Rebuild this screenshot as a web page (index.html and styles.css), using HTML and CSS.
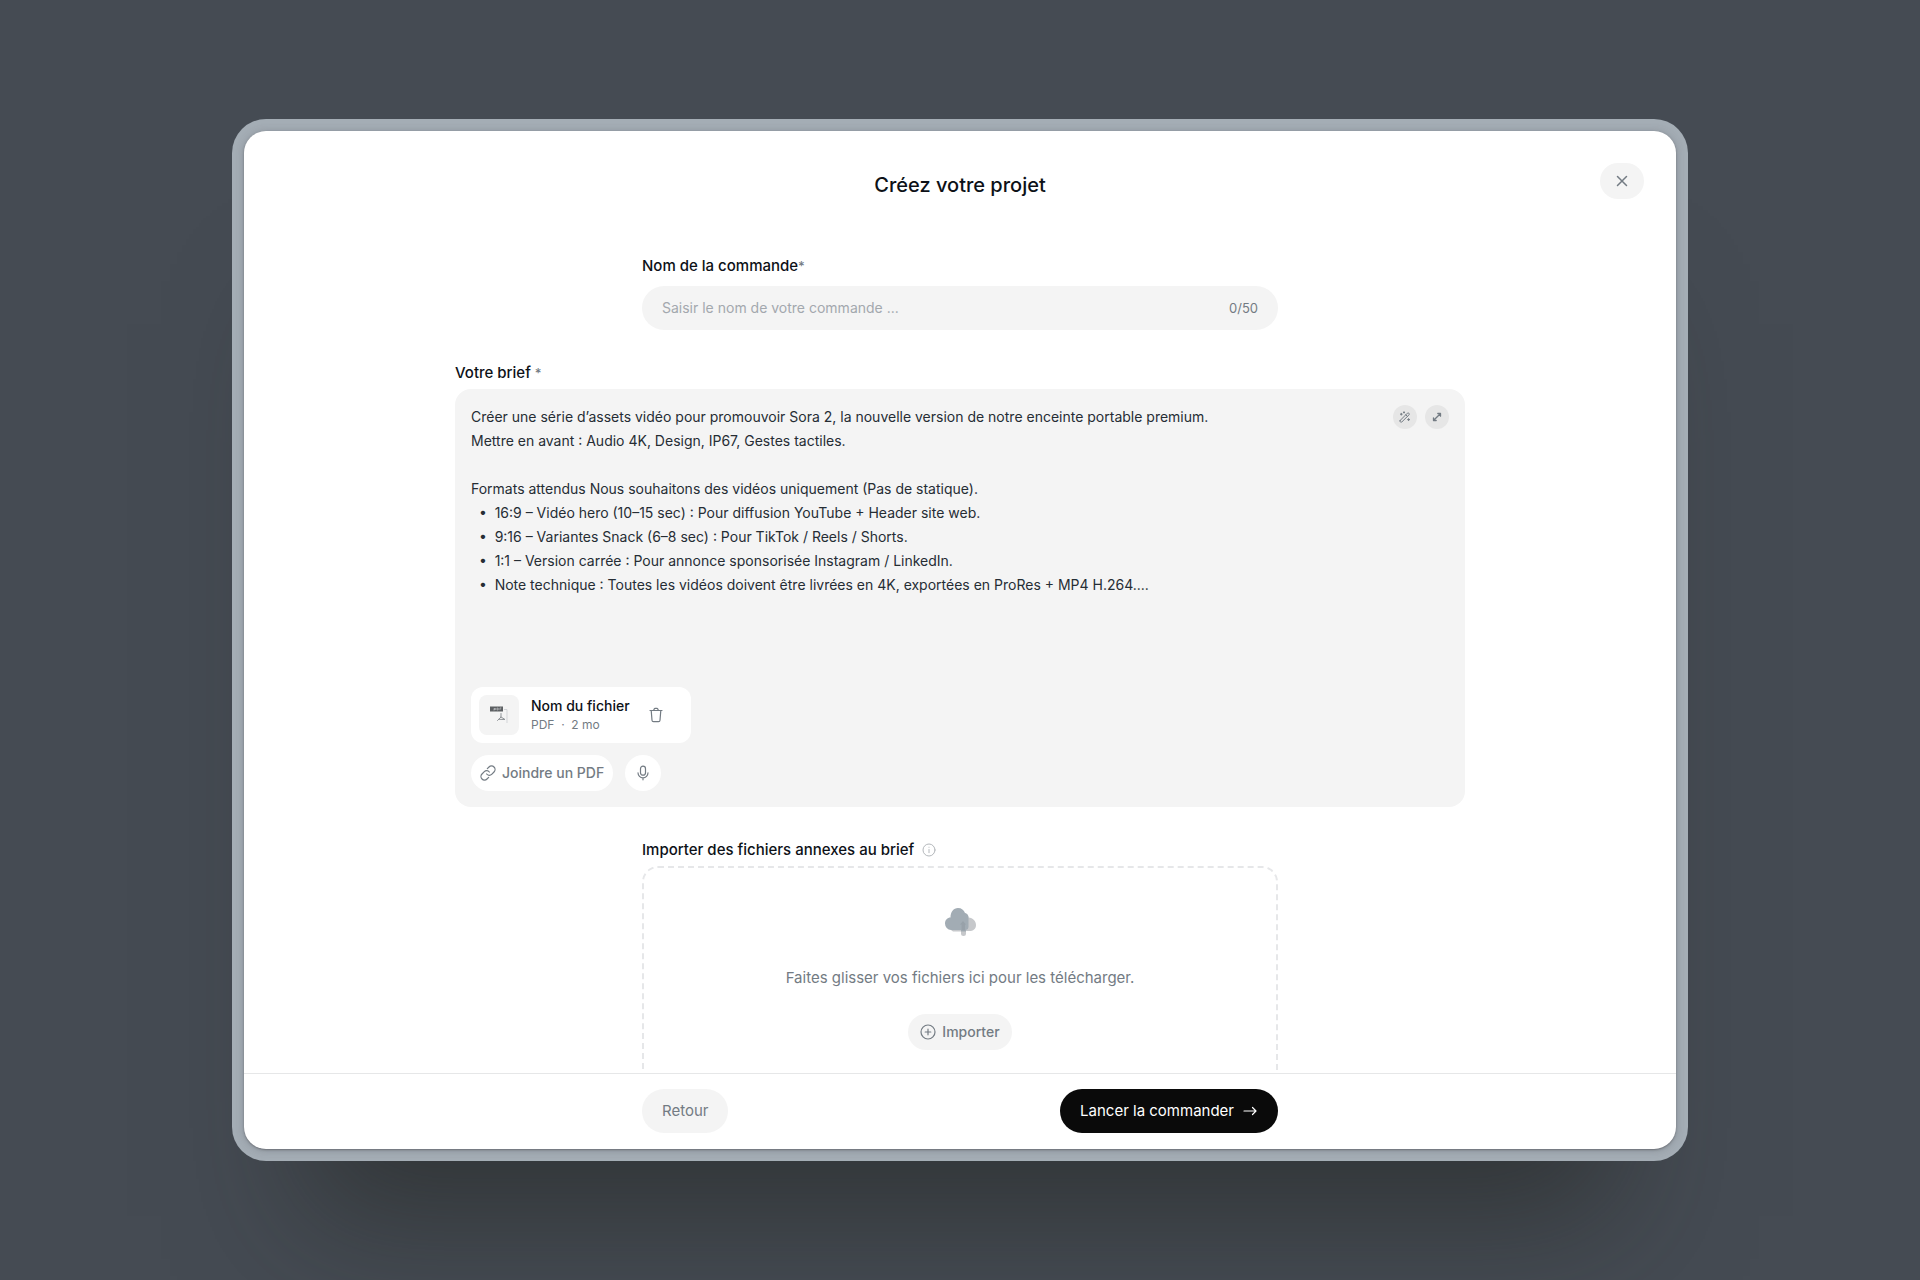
FILE: index.html
```html
<!DOCTYPE html>
<html lang="fr">
<head>
<meta charset="utf-8">
<meta name="viewport" content="width=device-width, initial-scale=1">
<title>Créez votre projet</title>
<link rel="stylesheet" href="styles.css">
</head>
<body>
<main class="modal">
  <form class="dialog">
    <header class="dialog-header">
      <h1 class="title">Créez votre projet</h1>
      <button class="close" type="button" aria-label="Fermer">
        <svg width="16" height="16" viewBox="0 0 16 16" fill="none" stroke="currentColor" stroke-width="1.5" stroke-linecap="round"><path d="M3.5 3.5l9 9M12.5 3.5l-9 9"/></svg>
      </button>
    </header>

    <div class="dialog-body">
      <section class="field narrow">
        <label class="label" for="order-name">Nom de la commande<span class="required">*</span></label>
        <div class="input-wrap">
          <input class="input" id="order-name" type="text" maxlength="50" placeholder="Saisir le nom de votre commande ...">
          <span class="counter">0/50</span>
        </div>
      </section>

      <section class="field wide">
        <label class="label" for="brief">Votre brief <span class="required">*</span></label>
        <div class="brief">
          <div class="brief-top">
            <textarea class="brief-text" id="brief" rows="11" spellcheck="false">Créer une série d’assets vidéo pour promouvoir Sora 2, la nouvelle version de notre enceinte portable premium.
Mettre en avant : Audio 4K, Design, IP67, Gestes tactiles.

Formats attendus Nous souhaitons des vidéos uniquement (Pas de statique).
  •  16:9 – Vidéo hero (10–15 sec) : Pour diffusion YouTube + Header site web.
  •  9:16 – Variantes Snack (6–8 sec) : Pour TikTok / Reels / Shorts.
  •  1:1 – Version carrée : Pour annonce sponsorisée Instagram / LinkedIn.
  •  Note technique : Toutes les vidéos doivent être livrées en 4K, exportées en ProRes + MP4 H.264....</textarea>
            <div class="brief-tools">
              <button class="tool" type="button" aria-label="Améliorer le brief">
                <svg width="12" height="12" viewBox="0 0 12 12" fill="none" stroke="currentColor" stroke-width="1" stroke-linecap="round" stroke-linejoin="round"><path d="M1.2 9.4L8.4 2.2a1 1 0 0 1 1.4 0l.2.2a1 1 0 0 1 0 1.4L2.8 11a1 1 0 0 1-1.4 0l-.2-.2a1 1 0 0 1 0-1.4zM6.8 3.8l1.6 1.6M2.3 2.3v1.8M1.4 3.2h1.8M5 .8v1.2M4.4 1.4h1.2M9.6 7.6v2M8.6 8.6h2"/></svg>
              </button>
              <button class="tool" type="button" aria-label="Agrandir">
                <svg width="12" height="12" viewBox="0 0 12 12" fill="none" stroke="currentColor" stroke-width="1.3" stroke-linecap="round" stroke-linejoin="round"><path d="M6.8 2.5h2.7v2.7M5.2 9.5H2.5V6.8M9.3 2.7L2.7 9.3"/></svg>
              </button>
            </div>
          </div>
          <div class="file">
            <span class="thumb">
              <svg width="20" height="20" viewBox="0 0 20 20" fill="none"><path d="M15 4.500h3V18" stroke="#d3d5d8"/><rect x="1" y="1.500" width="13" height="5" fill="#5d6063"/><path d="M5 5.500v-2h1.500v1H5M8 3v2h.800l.700-1-.700-1zM11 5v-2h1.300" stroke="#c4c6c8" stroke-width=".7"/><path d="M12 8.500v3.500l-3.500 3.500M12 12l4 2.500-6-.200" stroke="#909498" stroke-linecap="round" stroke-linejoin="round"/></svg>
            </span>
            <span class="file-info">
              <span class="file-name">Nom du fichier</span>
              <span class="file-meta">PDF &nbsp;·&nbsp; 2 mo</span>
            </span>
            <button class="trash" type="button" aria-label="Supprimer le fichier">
              <svg width="16" height="16" viewBox="0 0 16 16" fill="none" stroke="currentColor" stroke-width="1.200" stroke-linecap="round" stroke-linejoin="round"><path d="M2 3.500h12M3.200 3.500l.8 9.800a1.500 1.500 0 0 0 1.500 1.400h5a1.500 1.500 0 0 0 1.500-1.400l.8-9.800M5.700 3.300l.5-1.300a1 1 0 0 1 .9-.6h1.800a1 1 0 0 1 .9.600l.5 1.300"/></svg>
            </button>
          </div>
          <div class="brief-actions">
            <button class="pill attach" type="button">
              <svg width="16" height="16" viewBox="0 0 24 24" fill="none" stroke="currentColor" stroke-width="1.800" stroke-linecap="round" stroke-linejoin="round"><path d="M10 13.500a5 5 0 0 0 7.500.5l3.500-3.500a5 5 0 0 0-7.500-7.500L11 5.500"/><path d="M14 10.500a5 5 0 0 0-7.500-.5L3 13.500a5 5 0 0 0 7.500 7.500l2.500-2.500"/></svg>
              Joindre un PDF
            </button>
            <button class="pill mic" type="button" aria-label="Dicter le brief">
              <svg width="16" height="16" viewBox="0 0 16 16" fill="none" stroke="currentColor" stroke-width="1.200" stroke-linecap="round"><rect x="5.500" y="1.200" width="5" height="9" rx="2.500"/><path d="M3 7.800a5 5 0 0 0 10 0M8 12.800v2"/></svg>
            </button>
          </div>
        </div>
      </section>

      <section class="field narrow">
        <div class="label-row">
          <label class="label" for="annexes">Importer des fichiers annexes au brief</label>
          <svg class="info" width="14" height="14" viewBox="0 0 14 14" fill="none" stroke="currentColor" stroke-linecap="round"><circle cx="7" cy="7" r="6"/><path d="M7 6.500v3.200M7 4.200v.1"/></svg>
        </div>
        <div class="dropzone">
          <input id="annexes" type="file" multiple hidden>
          <svg class="cloud" width="32" height="32" viewBox="0 0 32 32"><path d="M9 25.500a5 5 0 0 1-3-4L19 7c3-.5 5.500 1.500 5.500 4.500 4.500.5 7.500 3.500 7.500 7.500s-3 6-6.500 6H22v2.500a2.500 2.500 0 0 1-5 0v-2z" fill="#c6c8cb"/><path d="M7 24a6.500 6.500 0 0 1-6-6.500c0-3.500 2.500-6 5.500-6C6.500 6 9.500 2 14 2c3.500 0 6 2 7 5 2.500.5 3.500 2.500 3.500 4.500V21a3 3 0 0 1-2.500 3v1.500h-5V24z" fill="#a2acb4"/><path d="M19 15l3 3.500h-1v6h-3.500v-6H16z" fill="#98a1a9"/></svg>
          <p class="drop-text">Faites glisser vos fichiers ici pour les télécharger.</p>
          <button class="pill import" type="button">
            <svg width="16" height="16" viewBox="0 0 16 16" fill="none" stroke="currentColor" stroke-width="1.200" stroke-linecap="round"><circle cx="8" cy="8" r="7"/><path d="M8 5.200v5.600M5.200 8h5.600"/></svg>
            Importer
          </button>
        </div>
      </section>
    </div>

    <footer class="dialog-footer">
      <div class="footer-actions">
        <button class="button secondary" type="button">Retour</button>
        <button class="button primary" type="submit">Lancer la commander
          <svg width="16" height="16" viewBox="0 0 16 16" fill="none" stroke="currentColor" stroke-width="1.200" stroke-linecap="round" stroke-linejoin="round"><path d="M2 8h12M10.500 4.500L14 8l-3.500 3.500"/></svg>
        </button>
      </div>
    </footer>
  </form>
</main>
</body>
</html>
```
FILE: styles.css
```css
:root {
  --ink: #0d1117;
  --text: #262d34;
  --muted: #737b83;
  --faint: #a3a8ae;
  --surface: #f4f4f4;
  --line: #e6e7e8;
}

* { box-sizing: border-box; }

body {
  margin: 0;
  min-height: 100vh;
  display: flex;
  justify-content: center;
  align-items: center;
  padding: 32px;
  background: #454b53;
  color: var(--ink);
  font: 15px/24px Inter, "Liberation Sans", sans-serif;
}

button, input, textarea { font: inherit; }

button {
  border: 0;
  padding: 0;
  cursor: pointer;
  display: flex;
  align-items: center;
  justify-content: center;
}

svg { display: block; flex: none; }

.modal {
  width: 100%;
  max-width: 1456px;
  height: calc(100vh - 238px);
  min-height: 480px;
  padding: 12px;
  display: flex;
  border-radius: 34px;
  background: #a4adb5;
  box-shadow: 0 130px 120px -75px rgba(30, 32, 28, 0.5);
}

.dialog {
  flex: 1;
  min-width: 0;
  display: flex;
  flex-direction: column;
  overflow: hidden;
  border-radius: 22px;
  background: #fff;
  box-shadow: 0 1px 2px rgba(70, 70, 75, 0.5), 0 1px 8px rgba(70, 70, 75, 0.3);
}

.dialog-header {
  display: grid;
  grid-template-columns: 1fr auto 1fr;
  align-items: start;
  padding: 32px 32px 0;
}

.title {
  grid-column: 2;
  margin: 8px 0 0;
  font-size: 20px;
  line-height: 28px;
  font-weight: 500;
}

.close {
  grid-column: 3;
  justify-self: end;
  width: 44px;
  height: 36px;
  border-radius: 18px;
  background: var(--surface);
  color: var(--muted);
}

.dialog-body {
  flex: 1;
  min-height: 0;
  overflow-y: auto;
  scrollbar-width: none;
  padding: 55px 32px 32px;
  display: flex;
  flex-direction: column;
  align-items: center;
  gap: 31px;
}

.field {
  width: 100%;
  display: flex;
  flex-direction: column;
  gap: 4px;
  flex: none;
}

.narrow { max-width: 636px; }
.wide { max-width: 1010px; }

.label { font-weight: 500; }

.required { color: var(--muted); font-size: 13px; }

.label-row {
  display: flex;
  align-items: center;
  gap: 8px;
}

.info { color: #b4b8bc; }

.input-wrap {
  display: flex;
  align-items: center;
  gap: 16px;
  height: 44px;
  margin-top: 4px;
  padding: 0 20px;
  border-radius: 22px;
  background: var(--surface);
}

.input {
  flex: 1;
  min-width: 0;
  border: 0;
  padding: 0;
  outline: 0;
  background: none;
  color: var(--ink);
  font-size: 14px;
}

.input::placeholder { color: var(--faint); opacity: 1; }

.counter { color: var(--muted); font-size: 13px; }

.brief {
  display: flex;
  flex-direction: column;
  align-items: flex-start;
  padding: 16px;
  border-radius: 16px;
  background: var(--surface);
}

.brief-top {
  width: 100%;
  display: flex;
  gap: 16px;
}

.brief-text {
  flex: 1;
  min-width: 0;
  display: block;
  border: 0;
  padding: 0;
  outline: 0;
  resize: none;
  background: none;
  color: var(--text);
  font-size: 14px;
  overflow: hidden;
}

.brief-tools {
  display: flex;
  gap: 8px;
}

.tool {
  width: 24px;
  height: 24px;
  border-radius: 12px;
  background: #e6e6e6;
  color: var(--muted);
}

.file {
  width: 220px;
  height: 56px;
  margin-top: 18px;
  padding: 8px;
  display: flex;
  align-items: center;
  border-radius: 12px;
  background: #fff;
}

.thumb {
  width: 40px;
  height: 40px;
  display: flex;
  align-items: center;
  justify-content: center;
  border-radius: 8px;
  background: var(--surface);
}

.file-info {
  display: flex;
  flex-direction: column;
  margin-left: 12px;
}

.file-name { font-size: 14px; line-height: 20px; font-weight: 500; }
.file-meta { font-size: 12px; line-height: 18px; color: var(--muted); }

.trash {
  width: 24px;
  height: 24px;
  margin: 0 15px 0 auto;
  background: none;
  color: var(--muted);
}

.brief-actions {
  display: flex;
  gap: 12px;
  margin-top: 12px;
}

.pill {
  height: 36px;
  border-radius: 18px;
  gap: 6px;
  font-size: 14px;
  font-weight: 500;
  color: var(--muted);
}

.attach { padding: 0 9px; background: #fff; }
.mic { width: 36px; background: #fff; }
.import { padding: 0 12px; background: var(--surface); }

.dropzone {
  display: flex;
  flex-direction: column;
  align-items: center;
  padding: 38px 16px 40px;
  border: 2px dashed #e6e7e9;
  border-radius: 16px;
}

.drop-text {
  margin: 28px 0 24px;
  color: var(--muted);
}

.dialog-footer {
  flex: none;
  padding: 15px 32px 16px;
  border-top: 1px solid var(--line);
}

.footer-actions {
  max-width: 636px;
  margin: 0 auto;
  display: flex;
  justify-content: space-between;
}

.button {
  height: 44px;
  padding: 0 20px;
  border-radius: 22px;
  gap: 8px;
}

.secondary { background: var(--surface); color: var(--muted); }
.primary { background: #0a0a0a; color: #fff; }
```
